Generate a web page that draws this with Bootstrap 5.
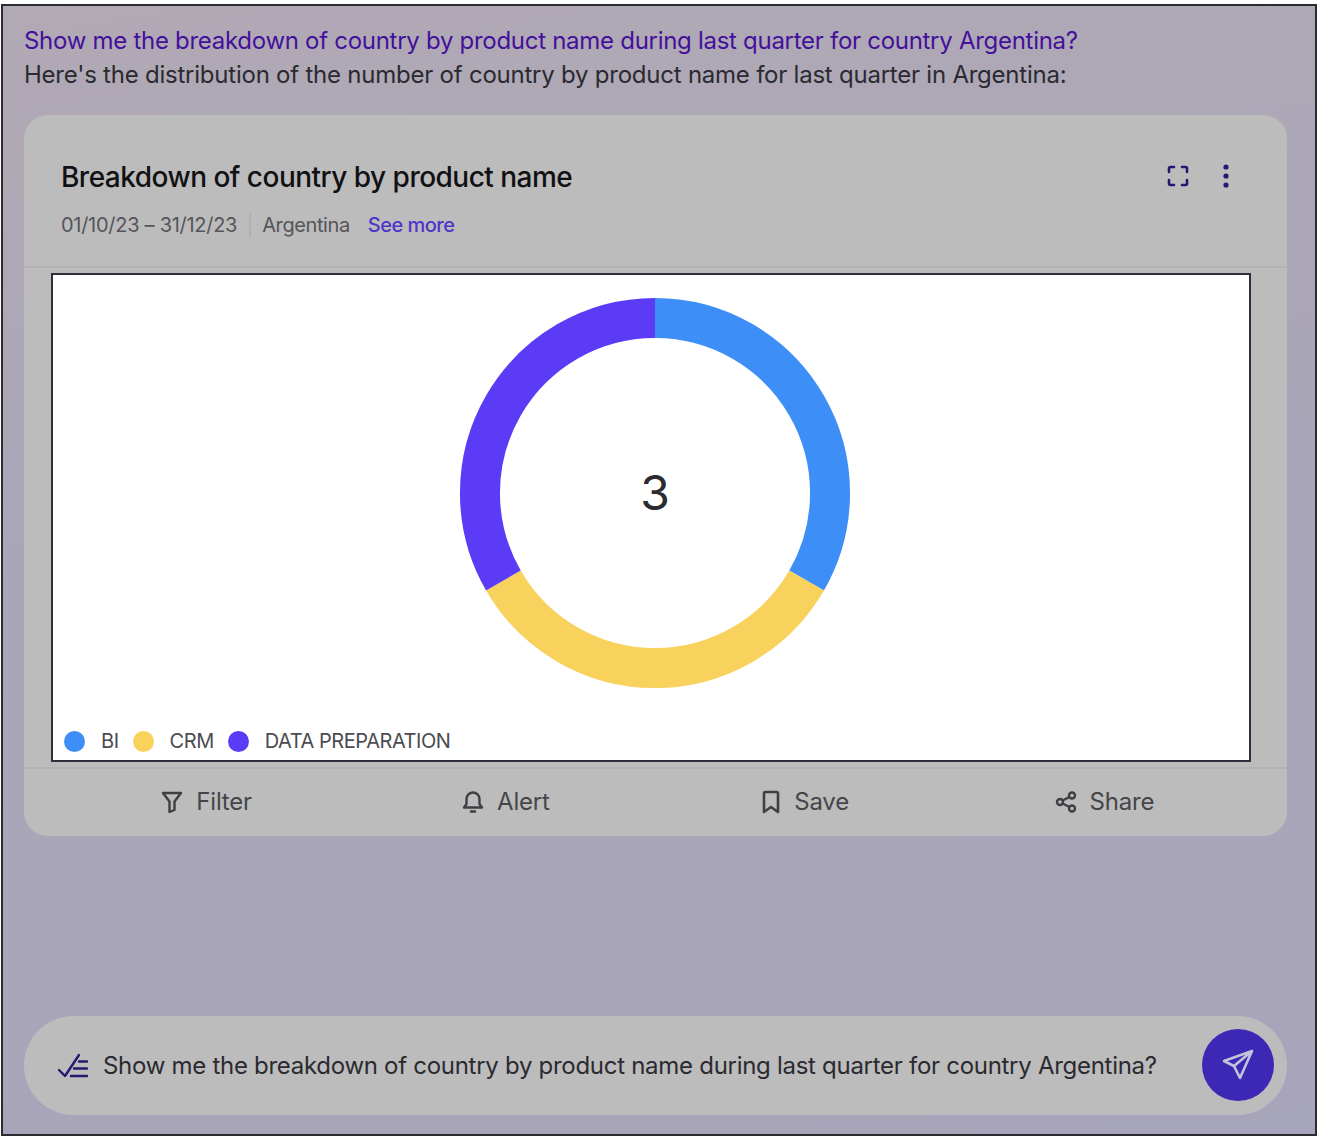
<!DOCTYPE html>
<html lang="en">
<head>
    <meta charset="UTF-8">
    <meta name="viewport" content="width=device-width, initial-scale=1.0">
    <title>Breakdown of country</title>
    <link href="https://cdn.jsdelivr.net/npm/bootstrap@5.3.0/dist/css/bootstrap.min.css" rel="stylesheet">

    <style>
        body {
            background: #fff;
            font-family: "Inter", "Liberation Sans", sans-serif;
            padding: 4px 0 1px 0;
            height: 1138px;
            overflow: hidden;
        }
        .chat-frame {
            height: 1132px;
            margin: 0 1px;
            border: 2px solid #2b2b30;
            background: linear-gradient(170deg, #b1a9b4 0%, #aaa6b8 40%, #a7a5bb 100%);
            padding: 18px 28px 19px 21px;
        }
        .ask-line {
            font-size: 24px;
            line-height: 34px;
            color: #44109b;
            letter-spacing: -0.285px;
        }
        .reply-line {
            font-size: 24px;
            line-height: 34px;
            color: #2a2a30;
            letter-spacing: -0.23px;
        }
        .chart-card {
            background: #bcbcbc;
            border: none;
            border-radius: 24px;
            margin-top: 23px;
        }
        .chart-head {
            height: 153px;
            padding: 41px 37px 0 37px;
            border-bottom: 2px solid #b3b3b3;
        }
        .chart-title {
            font-size: 28px;
            line-height: 42px;
            font-weight: 500;
            color: #111114;
            letter-spacing: -0.52px;
            margin: 0;
        }
        .meta-row {
            font-size: 20px;
            line-height: 28px;
            color: #55555a;
            letter-spacing: -0.28px;
            margin-top: 13px;
        }
        .meta-sep {
            border-left: 2px solid #b0b0b0;
            height: 24px;
            margin: 0 11px 0 12px;
        }
        .place-name {
            letter-spacing: -0.4px;
        }
        .see-more {
            color: #4f35c8;
            text-decoration: none;
            font-weight: 500;
            letter-spacing: -0.5px;
            margin-left: 18px;
        }
        .head-tools {
            gap: 24px;
            padding-right: 12px;
            margin-top: -1px;
        }
        .chart-box {
            height: 489px;
            margin: 5px 36px 5px 27px;
            background: #fff;
            border: 2px solid #2f2f3c;
            padding: 22px 10px 5px 10px;
        }
        .donut-num {
            font-size: 48px;
            fill: #2b2b30;
            font-family: "Inter", "Liberation Sans", sans-serif;
        }
        .legend-row {
            font-size: 20px;
            line-height: 28px;
            color: #4b4b50;
            letter-spacing: -0.45px;
            margin-top: 38px;
        }
        .legend-dot {
            width: 21px;
            height: 21px;
            border-radius: 50%;
            margin: 0 16px 0 1px;
        }
        .legend-name {
            margin-right: 13px;
        }
        .chart-foot {
            border-top: 2px solid #b3b3b3;
            height: 69px;
            padding: 0 33px 2px 33px;
        }
        .foot-btn {
            color: #45454a;
            font-size: 24px;
            line-height: 34px;
            letter-spacing: -0.2px;
            gap: 13px;
            border: none;
            background: none;
            padding: 0;
        }
        .composer {
            background: #bcbcbc;
            border-radius: 50px;
            height: 99px;
            padding: 0 13px 0 33px;
        }
        .composer-text {
            font-size: 24px;
            line-height: 34px;
            color: #2a2a30;
            letter-spacing: -0.285px;
            margin-left: 13px;
        }
        .send-btn {
            width: 72px;
            height: 72px;
            border-radius: 50%;
            background: #3c28b4;
            border: none;
            padding: 0;
            margin-bottom: 2px;
        }
    </style>
</head>
<body>
    <div class="chat-frame d-flex flex-column">
        <div class="ask-line">Show me the breakdown of country by product name during last quarter for country Argentina?</div>
        <div class="reply-line">Here's the distribution of the number of country by product name for last quarter in Argentina:</div>

        <div class="card chart-card">
            <div class="chart-head d-flex justify-content-between">
                <div>
                    <h5 class="chart-title">Breakdown of country by product name</h5>
                    <div class="meta-row d-flex align-items-center">
                        <span>01/10/23 – 31/12/23</span>
                        <span class="meta-sep"></span>
                        <span class="place-name">Argentina</span>
                        <a href="#" class="see-more">See more</a>
                    </div>
                </div>
                <div class="head-tools d-flex align-items-start">
                    <svg width="24" height="42" viewBox="0 0 24 42" fill="none" stroke="#241a6e" stroke-width="2.6" stroke-linecap="round" stroke-linejoin="round">
                        <path d="M8 12H4.5Q3 12 3 13.5V17M16 12H19.5Q21 12 21 13.5V17M3 25V28.500Q3 30 4.500 30H8M21 25V28.500Q21 30 19.500 30H16"/>
                    </svg>
                    <svg width="24" height="42" viewBox="0 0 24 42" fill="#241a6e">
                        <circle cx="12" cy="12" r="2.600"/>
                        <circle cx="12" cy="21" r="2.600"/>
                        <circle cx="12" cy="30" r="2.600"/>
                    </svg>
                </div>
            </div>

            <div class="chart-box d-flex flex-column">
                <div class="d-flex justify-content-center ps-2">
                    <svg width="392" height="392" viewBox="0 0 392 392" fill="none" stroke-width="40">
                        <path d="M196 21A175 175 0 0 1 347.600 283.500" stroke="#3e8ef7"/>
                        <path d="M347.600 283.500A175 175 0 0 1 44.400 283.500" stroke="#f8d25c"/>
                        <path d="M44.400 283.500A175 175 0 0 1 196 21" stroke="#5b3bf5"/>
                        <text x="196" y="213" text-anchor="middle" class="donut-num" stroke="none">3</text>
                    </svg>
                </div>
                <div class="legend-row d-flex align-items-center">
                    <span class="legend-dot" style="background:#3e8ef7"></span><span class="legend-name">BI</span>
                    <span class="legend-dot" style="background:#f8d25c"></span><span class="legend-name">CRM</span>
                    <span class="legend-dot" style="background:#5b3bf5"></span><span>DATA PREPARATION</span>
                </div>
            </div>

            <div class="chart-foot row g-0 align-items-center">
                <div class="col-3 d-flex justify-content-center">
                    <button class="foot-btn d-flex align-items-center">
                        <svg width="22" height="24" viewBox="0 0 22 24" fill="none" stroke="#3f3f44" stroke-width="2.400" stroke-linejoin="round" stroke-linecap="round"><path d="M2 3H20L13.500 11.500V20L8.500 22V11.500Z"/></svg>
                        Filter
                    </button>
                </div>
                <div class="col-3 d-flex justify-content-center">
                    <button class="foot-btn d-flex align-items-center">
                        <svg width="22" height="24" viewBox="0 0 22 24" fill="none" stroke="#3f3f44" stroke-width="2.400" stroke-linejoin="round" stroke-linecap="round"><path d="M2 17.500H20L17.500 14V9A6.500 6.500 0 0 0 4.500 9V14ZM9 21.500H13"/></svg>
                        Alert
                    </button>
                </div>
                <div class="col-3 d-flex justify-content-center">
                    <button class="foot-btn d-flex align-items-center">
                        <svg width="20" height="24" viewBox="0 0 20 24" fill="none" stroke="#3f3f44" stroke-width="2.600" stroke-linejoin="round" stroke-linecap="round"><path d="M3 3.500Q3 2 4.500 2H15.500Q17 2 17 3.500V22L10 17L3 22Z"/></svg>
                        Save
                    </button>
                </div>
                <div class="col-3 d-flex justify-content-center">
                    <button class="foot-btn d-flex align-items-center">
                        <svg width="22" height="24" viewBox="0 0 22 24" fill="none" stroke="#3f3f44" stroke-width="2.400"><circle cx="17" cy="5.500" r="3"/><circle cx="5" cy="12" r="3"/><circle cx="17" cy="18.500" r="3"/><path d="M7.600 10.500L14.400 7M7.600 13.500L14.400 17"/></svg>
                        Share
                    </button>
                </div>
            </div>
        </div>

        <div class="composer d-flex align-items-center mt-auto">
            <svg width="33" height="26" viewBox="0 0 33 26" fill="none" stroke="#241a6e" stroke-width="2.400" stroke-linecap="round" stroke-linejoin="round">
                <path d="M2 17L8 23L22 2M22 8.500H30M17 15.500H30M14 23H30"/>
            </svg>
            <div class="composer-text flex-grow-1">Show me the breakdown of country by product name during last quarter for country Argentina?</div>
            <button class="send-btn d-flex align-items-center justify-content-center">
                <svg width="34" height="34" viewBox="0 0 34 34" fill="none" stroke="#c4c2dc" stroke-width="2.600" stroke-linejoin="round" stroke-linecap="round">
                    <path d="M31 3L3 13L13 18L19 30ZM31 3L13 18"/>
                </svg>
            </button>
        </div>
    </div>

    <script src="https://cdn.jsdelivr.net/npm/bootstrap@5.3.0/dist/js/bootstrap.bundle.min.js"></script>
</body>
</html>
